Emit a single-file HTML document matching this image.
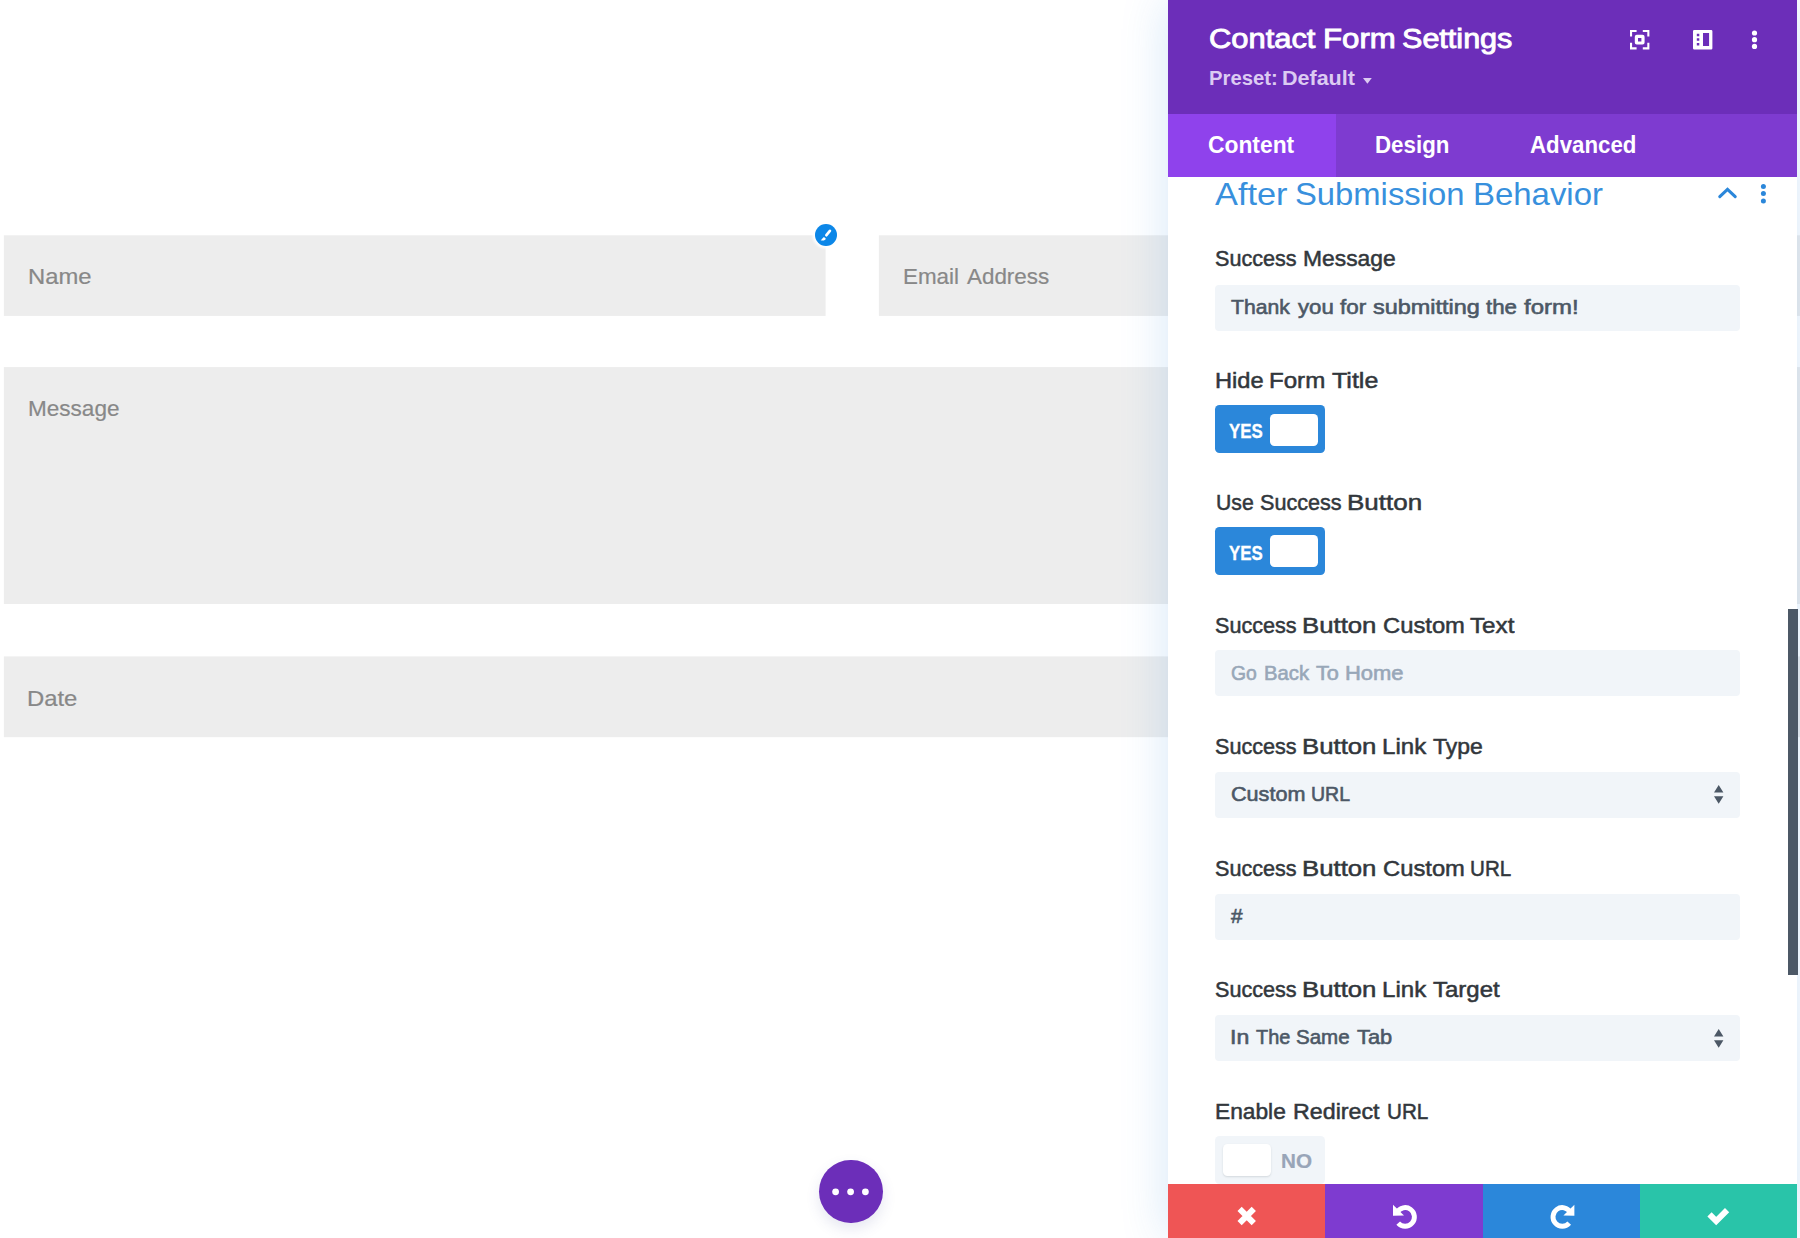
<!DOCTYPE html>
<html lang="en">
<head>
<meta charset="utf-8">
<title>Contact Form Settings</title>
<style>
html,body{margin:0;padding:0;}
body{width:1800px;height:1238px;overflow:hidden;background:#fff;position:relative;font-family:"Liberation Sans",sans-serif;}
.abs{position:absolute;}
.t{position:absolute;white-space:nowrap;line-height:1;transform-origin:0 0;font-family:"Liberation Sans",sans-serif;}
.fld{position:absolute;background:#ededed;}
#panel{position:absolute;left:1168px;top:0;width:629.3px;height:1238px;background:#fff;box-shadow:0 0 45px rgba(43,135,218,.2);}
#hdr{position:absolute;left:1168px;top:0;width:629.3px;height:114px;background:#6c2eb9;}
#tabs{position:absolute;left:1168px;top:114px;width:629.3px;height:62.7px;background:#7e3bd0;}
#tabact{position:absolute;left:1168px;top:114px;width:167.5px;height:62.7px;background:#8f42ec;}
.inp{position:absolute;left:1215px;width:524.6px;height:46px;background:#f1f5f9;border-radius:4px;}
.tog{position:absolute;left:1215px;width:110.3px;height:47.6px;border-radius:4.5px;}
.tog.on{background:#2b87da;}
.tog.off{background:#f1f5f9;}
.hnd{position:absolute;width:48px;height:32px;background:#fff;border-radius:4.5px;}
.fb{position:absolute;top:1184px;height:54px;}
svg{position:absolute;overflow:visible;}
</style>
</head>
<body>
<!-- page form fields -->
<svg style="left:0;top:0" width="1800" height="1238" viewBox="0 0 1800 1238"><g fill="#ededed">
<rect x="3.85" y="235.3" width="821.75" height="80.6"/>
<rect x="878.9" y="235.3" width="925" height="80.6"/>
<rect x="3.85" y="367.1" width="1800" height="236.9"/>
<rect x="3.85" y="656.4" width="1800" height="80.8"/>
</g></svg>

<!-- edit badge -->
<div class="abs" style="left:814.8px;top:224.3px;width:21.9px;height:21.9px;border-radius:50%;background:#0c87e8;box-shadow:0 0 2.5px 2.5px rgba(255,255,255,.96);"></div>
<svg style="left:814.8px;top:224.3px" width="22" height="22" viewBox="0 0 22 22"><path d="M14.9 6.9L11.4 11.2" stroke="#fff" stroke-width="2.7" stroke-linecap="round" fill="none"/><path d="M9 13.1L10.9 14.7C10.3 16.4 8.2 16.9 5.600 16.200C7.300 15.600 7.500 13.700 9 13.100z" fill="#fff"/></svg>

<!-- floating dots button -->
<div class="abs" style="left:819.3px;top:1159.7px;width:63.3px;height:63.3px;border-radius:50%;background:#6c2eb9;box-shadow:0 6px 14px rgba(60,70,150,.13);"></div>
<svg style="left:819.3px;top:1159.8px" width="63" height="63" viewBox="0 0 63 63"><circle cx="16.6" cy="31.8" r="3.4" fill="#fff"/><circle cx="31.6" cy="31.8" r="3.4" fill="#fff"/><circle cx="46.4" cy="31.8" r="3.4" fill="#fff"/></svg>

<!-- panel -->
<div id="panel"></div>
<div id="hdr"></div>
<div id="tabs"></div>
<div id="tabact"></div>

<!-- header icons -->
<svg style="left:1630px;top:30px" width="19.4" height="19.4" viewBox="0 0 19.4 19.4" fill="none" stroke="#fff" stroke-width="2.1">
<path d="M1.05 6.6V1.05H6.6M12.8 1.05H18.35V6.6M18.35 12.8V18.35H12.8M6.6 18.35H1.05V12.8"/>
<rect x="6.4" y="6.4" width="6.6" height="6.6" stroke-width="3.2" rx=".4"/>
</svg>
<svg style="left:1692.8px;top:30px" width="19.4" height="19.4" viewBox="0 0 19.4 19.4">
<path fill-rule="evenodd" fill="#fff" d="M1.2 0h17a1.2 1.2 0 0 1 1.2 1.2v17a1.2 1.2 0 0 1-1.2 1.2h-17a1.2 1.2 0 0 1-1.2-1.2v-17a1.2 1.2 0 0 1 1.2-1.2zM3.8 3.7v2.5h2.5v-2.5zM3.8 8.3v2.5h2.5v-2.5zM3.8 12.9v2.5h2.5v-2.5zM10 3.1v12.9h6.1v-12.9z"/>
</svg>
<svg style="left:1750px;top:28px" width="10" height="24" viewBox="0 0 10 24"><circle cx="4.5" cy="5" r="2.6" fill="#fff"/><circle cx="4.5" cy="11.7" r="2.6" fill="#fff"/><circle cx="4.5" cy="18.4" r="2.6" fill="#fff"/></svg>
<!-- preset caret -->
<svg style="left:1362.8px;top:77.5px" width="9" height="6" viewBox="0 0 9 6"><path d="M0 0h8.8L4.4 5.8z" fill="#dccbf2"/></svg>

<!-- section icons -->
<svg style="left:1716px;top:184px" width="24" height="18" viewBox="0 0 24 18"><path d="M3.8 12.6L11.5 5.4L19.2 12.6" fill="none" stroke="#2b87da" stroke-width="3.1" stroke-linecap="round" stroke-linejoin="miter"/></svg>
<svg style="left:1759px;top:182px" width="10" height="24" viewBox="0 0 10 24"><circle cx="4.4" cy="4.4" r="2.5" fill="#2b87da"/><circle cx="4.4" cy="11.6" r="2.5" fill="#2b87da"/><circle cx="4.4" cy="18.9" r="2.5" fill="#2b87da"/></svg>

<!-- inputs -->
<div class="inp" style="top:285px;"></div>
<div class="tog on" style="top:405px;"></div><div class="hnd" style="left:1270.2px;top:413.6px;"></div>
<div class="tog on" style="top:527px;"></div><div class="hnd" style="left:1270.2px;top:534.6px;"></div>
<div class="inp" style="top:650px;"></div>
<div class="inp" style="top:771.5px;"></div>
<div class="inp" style="top:893.5px;"></div>
<div class="inp" style="top:1015.2px;"></div>
<div class="tog off" style="top:1136.3px;"></div><div class="hnd" style="left:1223px;top:1144.3px;width:47.5px;box-shadow:0 1px 2px rgba(76,88,102,.18);"></div>

<!-- select arrows -->
<svg style="left:1714px;top:785px" width="10" height="20" viewBox="0 0 10 20"><path d="M4.7 0L9.4 7.5H0zM0 11.3H9.4L4.7 18.8z" fill="#4c5866"/></svg>
<svg style="left:1714px;top:1028.7px" width="10" height="20" viewBox="0 0 10 20"><path d="M4.7 0L9.4 7.5H0zM0 11.3H9.4L4.7 18.8z" fill="#4c5866"/></svg>

<!-- scrollbar -->
<div class="abs" style="left:1787.5px;top:609px;width:10px;height:366px;background:#4c5866;"></div>

<span class="t" style="left:27.81px;top:266.20px;font-size:22.2px;font-weight:normal;color:#888888;transform:scaleX(1.0729);-webkit-text-stroke:0.2px #888888;">Name</span>
<span class="t" style="left:903.49px;top:266.40px;font-size:22.2px;font-weight:normal;color:#888888;transform:scaleX(1.0084);-webkit-text-stroke:0.2px #888888;">Email</span>
<span class="t" style="left:966.69px;top:266.40px;font-size:22.2px;font-weight:normal;color:#888888;transform:scaleX(1.0097);-webkit-text-stroke:0.2px #888888;">Address</span>
<span class="t" style="left:27.93px;top:397.80px;font-size:22.2px;font-weight:normal;color:#888888;transform:scaleX(1.0159);-webkit-text-stroke:0.2px #888888;">Message</span>
<span class="t" style="left:27.41px;top:688.00px;font-size:22.2px;font-weight:normal;color:#888888;transform:scaleX(1.0748);-webkit-text-stroke:0.2px #888888;">Date</span>
<span class="t" style="left:1208.75px;top:23.50px;font-size:28.2px;font-weight:normal;color:#ffffff;transform:scaleX(1.0957);-webkit-text-stroke:0.9px #ffffff;">Contact</span>
<span class="t" style="left:1322.71px;top:23.50px;font-size:28.2px;font-weight:normal;color:#ffffff;transform:scaleX(1.1066);-webkit-text-stroke:0.9px #ffffff;">Form</span>
<span class="t" style="left:1401.61px;top:23.50px;font-size:28.2px;font-weight:normal;color:#ffffff;transform:scaleX(1.0838);-webkit-text-stroke:0.9px #ffffff;">Settings</span>
<span class="t" style="left:1208.53px;top:68.80px;font-size:19.4px;font-weight:bold;color:#dccbf2;transform:scaleX(1.0451);">Preset:</span>
<span class="t" style="left:1282.34px;top:68.80px;font-size:19.4px;font-weight:bold;color:#dccbf2;transform:scaleX(1.1093);">Default</span>
<span class="t" style="left:1208.39px;top:134.20px;font-size:23.0px;font-weight:bold;color:#ffffff;transform:scaleX(0.9921);">Content</span>
<span class="t" style="left:1375.26px;top:134.20px;font-size:23.0px;font-weight:bold;color:#ffffff;transform:scaleX(0.9700);">Design</span>
<span class="t" style="left:1529.50px;top:134.20px;font-size:23.0px;font-weight:bold;color:#ffffff;transform:scaleX(0.9677);">Advanced</span>
<span class="t" style="left:1214.93px;top:177.70px;font-size:32px;font-weight:normal;color:#3890dd;transform:scaleX(1.0719);">After</span>
<span class="t" style="left:1295.10px;top:177.70px;font-size:32px;font-weight:normal;color:#3890dd;transform:scaleX(1.0240);">Submission</span>
<span class="t" style="left:1472.50px;top:177.70px;font-size:32px;font-weight:normal;color:#3890dd;transform:scaleX(1.0290);">Behavior</span>
<span class="t" style="left:1215.34px;top:248.30px;font-size:21.6px;font-weight:normal;color:#32373c;transform:scaleX(1.0005);-webkit-text-stroke:0.5px #32373c;">Success</span>
<span class="t" style="left:1302.51px;top:248.30px;font-size:21.6px;font-weight:normal;color:#32373c;transform:scaleX(1.0574);-webkit-text-stroke:0.5px #32373c;">Message</span>
<span class="t" style="left:1214.94px;top:370.40px;font-size:21.6px;font-weight:normal;color:#32373c;transform:scaleX(1.0950);-webkit-text-stroke:0.5px #32373c;">Hide</span>
<span class="t" style="left:1269.30px;top:370.40px;font-size:21.6px;font-weight:normal;color:#32373c;transform:scaleX(1.1159);-webkit-text-stroke:0.5px #32373c;">Form</span>
<span class="t" style="left:1331.74px;top:370.40px;font-size:21.6px;font-weight:normal;color:#32373c;transform:scaleX(1.1580);-webkit-text-stroke:0.5px #32373c;">Title</span>
<span class="t" style="left:1215.75px;top:492.40px;font-size:21.6px;font-weight:normal;color:#32373c;transform:scaleX(0.9827);-webkit-text-stroke:0.5px #32373c;">Use</span>
<span class="t" style="left:1260.44px;top:492.40px;font-size:21.6px;font-weight:normal;color:#32373c;transform:scaleX(1.0005);-webkit-text-stroke:0.5px #32373c;">Success</span>
<span class="t" style="left:1347.32px;top:492.40px;font-size:21.6px;font-weight:normal;color:#32373c;transform:scaleX(1.2025);-webkit-text-stroke:0.5px #32373c;">Button</span>
<span class="t" style="left:1215.34px;top:614.50px;font-size:21.6px;font-weight:normal;color:#32373c;transform:scaleX(1.0005);-webkit-text-stroke:0.5px #32373c;">Success</span>
<span class="t" style="left:1302.44px;top:614.50px;font-size:21.6px;font-weight:normal;color:#32373c;transform:scaleX(1.1923);-webkit-text-stroke:0.5px #32373c;">Button</span>
<span class="t" style="left:1382.51px;top:614.50px;font-size:21.6px;font-weight:normal;color:#32373c;transform:scaleX(1.1009);-webkit-text-stroke:0.5px #32373c;">Custom</span>
<span class="t" style="left:1470.15px;top:614.50px;font-size:21.6px;font-weight:normal;color:#32373c;transform:scaleX(1.1213);-webkit-text-stroke:0.5px #32373c;">Text</span>
<span class="t" style="left:1215.34px;top:735.90px;font-size:21.6px;font-weight:normal;color:#32373c;transform:scaleX(1.0005);-webkit-text-stroke:0.5px #32373c;">Success</span>
<span class="t" style="left:1302.44px;top:735.90px;font-size:21.6px;font-weight:normal;color:#32373c;transform:scaleX(1.1923);-webkit-text-stroke:0.5px #32373c;">Button</span>
<span class="t" style="left:1381.50px;top:735.90px;font-size:21.6px;font-weight:normal;color:#32373c;transform:scaleX(1.1150);-webkit-text-stroke:0.5px #32373c;">Link</span>
<span class="t" style="left:1433.47px;top:735.90px;font-size:21.6px;font-weight:normal;color:#32373c;transform:scaleX(1.0636);-webkit-text-stroke:0.5px #32373c;">Type</span>
<span class="t" style="left:1215.34px;top:857.70px;font-size:21.6px;font-weight:normal;color:#32373c;transform:scaleX(1.0005);-webkit-text-stroke:0.5px #32373c;">Success</span>
<span class="t" style="left:1302.44px;top:857.70px;font-size:21.6px;font-weight:normal;color:#32373c;transform:scaleX(1.1923);-webkit-text-stroke:0.5px #32373c;">Button</span>
<span class="t" style="left:1382.51px;top:857.70px;font-size:21.6px;font-weight:normal;color:#32373c;transform:scaleX(1.1009);-webkit-text-stroke:0.5px #32373c;">Custom</span>
<span class="t" style="left:1469.79px;top:857.70px;font-size:21.6px;font-weight:normal;color:#32373c;transform:scaleX(0.9544);-webkit-text-stroke:0.5px #32373c;">URL</span>
<span class="t" style="left:1215.34px;top:979.20px;font-size:21.6px;font-weight:normal;color:#32373c;transform:scaleX(1.0005);-webkit-text-stroke:0.5px #32373c;">Success</span>
<span class="t" style="left:1302.44px;top:979.20px;font-size:21.6px;font-weight:normal;color:#32373c;transform:scaleX(1.1923);-webkit-text-stroke:0.5px #32373c;">Button</span>
<span class="t" style="left:1381.50px;top:979.20px;font-size:21.6px;font-weight:normal;color:#32373c;transform:scaleX(1.1150);-webkit-text-stroke:0.5px #32373c;">Link</span>
<span class="t" style="left:1433.45px;top:979.20px;font-size:21.6px;font-weight:normal;color:#32373c;transform:scaleX(1.1107);-webkit-text-stroke:0.5px #32373c;">Target</span>
<span class="t" style="left:1215.02px;top:1101.40px;font-size:21.6px;font-weight:normal;color:#32373c;transform:scaleX(1.0531);-webkit-text-stroke:0.5px #32373c;">Enable</span>
<span class="t" style="left:1292.68px;top:1101.40px;font-size:21.6px;font-weight:normal;color:#32373c;transform:scaleX(1.0767);-webkit-text-stroke:0.5px #32373c;">Redirect</span>
<span class="t" style="left:1387.49px;top:1101.40px;font-size:21.6px;font-weight:normal;color:#32373c;transform:scaleX(0.9568);-webkit-text-stroke:0.5px #32373c;">URL</span>
<span class="t" style="left:1231.32px;top:297.30px;font-size:20.4px;font-weight:normal;color:#4c5866;transform:scaleX(1.0372);-webkit-text-stroke:0.6px #4c5866;">Thank</span>
<span class="t" style="left:1297.62px;top:297.30px;font-size:20.4px;font-weight:normal;color:#4c5866;transform:scaleX(1.0892);-webkit-text-stroke:0.6px #4c5866;">you</span>
<span class="t" style="left:1339.59px;top:297.30px;font-size:20.4px;font-weight:normal;color:#4c5866;transform:scaleX(1.0995);-webkit-text-stroke:0.6px #4c5866;">for</span>
<span class="t" style="left:1372.93px;top:297.30px;font-size:20.4px;font-weight:normal;color:#4c5866;transform:scaleX(1.1493);-webkit-text-stroke:0.6px #4c5866;">submitting</span>
<span class="t" style="left:1485.89px;top:297.30px;font-size:20.4px;font-weight:normal;color:#4c5866;transform:scaleX(1.0945);-webkit-text-stroke:0.6px #4c5866;">the</span>
<span class="t" style="left:1523.58px;top:297.30px;font-size:20.4px;font-weight:normal;color:#4c5866;transform:scaleX(1.1747);-webkit-text-stroke:0.6px #4c5866;">form!</span>
<span class="t" style="left:1231.01px;top:663.40px;font-size:20.4px;font-weight:normal;color:#98a7b8;transform:scaleX(0.9491);-webkit-text-stroke:0.6px #98a7b8;">Go</span>
<span class="t" style="left:1263.50px;top:663.40px;font-size:20.4px;font-weight:normal;color:#98a7b8;transform:scaleX(0.9934);-webkit-text-stroke:0.6px #98a7b8;">Back</span>
<span class="t" style="left:1316.22px;top:663.40px;font-size:20.4px;font-weight:normal;color:#98a7b8;transform:scaleX(1.0645);-webkit-text-stroke:0.6px #98a7b8;">To</span>
<span class="t" style="left:1344.98px;top:663.40px;font-size:20.4px;font-weight:normal;color:#98a7b8;transform:scaleX(1.0768);-webkit-text-stroke:0.6px #98a7b8;">Home</span>
<span class="t" style="left:1230.89px;top:784.10px;font-size:20.4px;font-weight:normal;color:#4c5866;transform:scaleX(1.0597);-webkit-text-stroke:0.6px #4c5866;">Custom</span>
<span class="t" style="left:1311.40px;top:784.10px;font-size:20.4px;font-weight:normal;color:#4c5866;transform:scaleX(0.9572);-webkit-text-stroke:0.6px #4c5866;">URL</span>
<span class="t" style="left:1231.04px;top:906.30px;font-size:20.4px;font-weight:normal;color:#4c5866;transform:scaleX(1.0183);-webkit-text-stroke:0.6px #4c5866;">#</span>
<span class="t" style="left:1229.95px;top:1027.10px;font-size:20.4px;font-weight:normal;color:#4c5866;transform:scaleX(1.1306);-webkit-text-stroke:0.6px #4c5866;">In</span>
<span class="t" style="left:1255.84px;top:1027.10px;font-size:20.4px;font-weight:normal;color:#4c5866;transform:scaleX(0.9757);-webkit-text-stroke:0.6px #4c5866;">The</span>
<span class="t" style="left:1296.43px;top:1027.10px;font-size:20.4px;font-weight:normal;color:#4c5866;transform:scaleX(1.0073);-webkit-text-stroke:0.6px #4c5866;">Same</span>
<span class="t" style="left:1356.91px;top:1027.10px;font-size:20.4px;font-weight:normal;color:#4c5866;transform:scaleX(1.0716);-webkit-text-stroke:0.6px #4c5866;">Tab</span>
<span class="t" style="left:1228.50px;top:421.90px;font-size:19.3px;font-weight:bold;color:#ffffff;transform:scaleX(0.8741);-webkit-text-stroke:0.3px #ffffff;">YES</span>
<span class="t" style="left:1228.50px;top:543.70px;font-size:19.3px;font-weight:bold;color:#ffffff;transform:scaleX(0.8741);-webkit-text-stroke:0.3px #ffffff;">YES</span>
<span class="t" style="left:1280.81px;top:1152.30px;font-size:19.3px;font-weight:bold;color:#98a5b8;transform:scaleX(1.0717);-webkit-text-stroke:0.2px #98a5b8;">NO</span>

<!-- footer buttons -->
<div class="fb" style="left:1168px;width:157.5px;background:#ef5555;"></div>
<div class="fb" style="left:1325.4px;width:157.4px;background:#7e3bd0;"></div>
<div class="fb" style="left:1482.7px;width:157.4px;background:#2b87da;"></div>
<div class="fb" style="left:1640px;width:157.3px;background:#29c4a9;"></div>
<!-- X -->
<svg style="left:0;top:0" width="1800" height="1238" viewBox="0 0 1800 1238">
<g stroke="#fff" fill="none" stroke-width="5" stroke-linejoin="round">
<path d="M1239.6 1208.95L1253.8 1223.15M1253.8 1208.95L1239.6 1223.15" stroke-width="6" stroke-linecap="butt"/>
<path d="M1709.5 1214.3L1716.2 1221L1727.1 1210.1" stroke-width="6" stroke-linecap="butt" stroke-linejoin="miter"/>
<!-- undo -->
<path d="M1397.05 1212.25A9.3 9.3 0 1 1 1398.19 1223.12" stroke-width="4.9"/>
<path d="M1393 1204.7V1215.8L1404 1215.5z" fill="#fff" stroke="none"/>
<!-- redo -->
<path d="M1570.35 1212.25A9.3 9.3 0 1 0 1569.21 1223.12" stroke-width="4.9"/>
<path d="M1574.4 1204.7V1215.8L1563.4 1215.5z" fill="#fff" stroke="none"/>
</g>
</svg>
</body>
</html>
